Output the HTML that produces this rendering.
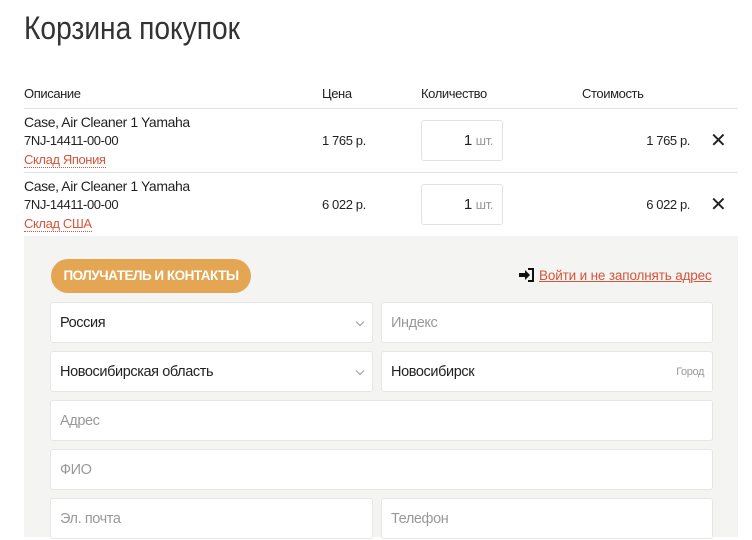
<!DOCTYPE html>
<html><head><meta charset="utf-8"><style>
*{margin:0;padding:0;box-sizing:border-box}
body{width:752px;height:537px;overflow:hidden;background:#fff;font-family:"Liberation Sans",sans-serif;color:#222;position:relative;letter-spacing:-0.4px}
.a{position:absolute;white-space:nowrap}
h1{position:absolute;left:24px;top:10px;font-weight:normal;font-size:32px;color:#333;transform:scaleX(0.88);transform-origin:left;white-space:nowrap;letter-spacing:0}
.hd{font-size:13px;top:86px}
.line{position:absolute;left:24px;width:714px;height:1px;background:#e2e2e2}
.t{font-size:14px}
.s{font-size:13px}
.r{font-size:13px;color:#d4553a;border-bottom:1px dotted #d4553a;line-height:14px}
.q{position:absolute;left:421px;width:82px;height:41px;border:1px solid #e2e2e2;border-radius:3px;font-size:15px;text-align:right;padding-right:9px;line-height:39px}
.q span{color:#999;font-size:13px}
.x{font-size:20px;font-family:"DejaVu Sans",sans-serif}
.panel{position:absolute;left:24px;top:236px;width:714px;height:301px;background:#f4f4f2}
.btn{position:absolute;left:51px;top:259px;width:200px;height:34px;border-radius:17px;background:#e4a653;color:#fff;font-size:13.5px;font-weight:bold;text-align:center;line-height:34px;letter-spacing:-0.5px}
.f{position:absolute;height:41px;background:#fff;border:1px solid #e6e6e4;border-radius:3px;font-size:14.5px;line-height:41px;padding-left:9px}
.p{color:#999}
.chev{position:absolute;right:9px;top:16px;width:6px;height:6px;border-right:1px solid #999;border-bottom:1px solid #999;transform:rotate(45deg)}
</style></head><body>
<h1>Корзина покупок</h1>
<div class="a hd" style="left:24px">Описание</div>
<div class="a hd" style="left:322px">Цена</div>
<div class="a hd" style="left:421px">Количество</div>
<div class="a hd" style="left:582px">Стоимость</div>
<div class="line" style="top:108px"></div>
<div class="a t" style="left:24px;top:114px">Case, Air Cleaner 1 Yamaha</div>
<div class="a s" style="left:24px;top:133px">7NJ-14411-00-00</div>
<div class="a r" style="left:24px;top:153px">Склад Япония</div>
<div class="a s" style="left:322px;top:133px">1 765 р.</div>
<div class="q" style="top:120px">1 <span>шт.</span></div>
<div class="a s" style="right:62px;top:133px">1 765 р.</div>
<div class="a x" style="left:710px;top:128px">✕</div>
<div class="line" style="top:172px"></div>
<div class="a t" style="left:24px;top:178px">Case, Air Cleaner 1 Yamaha</div>
<div class="a s" style="left:24px;top:197px">7NJ-14411-00-00</div>
<div class="a r" style="left:24px;top:217px">Склад США</div>
<div class="a s" style="left:322px;top:197px">6 022 р.</div>
<div class="q" style="top:184px">1 <span>шт.</span></div>
<div class="a s" style="right:62px;top:197px">6 022 р.</div>
<div class="a x" style="left:710px;top:192px">✕</div>
<div class="panel"></div>
<div class="btn">ПОЛУЧАТЕЛЬ И КОНТАКТЫ</div>
<svg class="a" style="left:519px;top:268px" width="16" height="14" viewBox="0 0 16 14"><path d="M0 5h6V2l5 5-5 5V9H0z" fill="#111"/><path d="M9 1h5v12H9" fill="none" stroke="#111" stroke-width="2"/></svg>
<div class="a" style="left:539px;top:268px;font-size:13.5px;letter-spacing:-0.15px;color:#d4553a;text-decoration:underline">Войти и не заполнять адрес</div>
<div class="f" style="left:50px;top:302px;width:323px">Россия<div class="chev"></div></div>
<div class="f p" style="left:381px;top:302px;width:332px">Индекс</div>
<div class="f" style="left:50px;top:351px;width:323px">Новосибирская область<div class="chev"></div></div>
<div class="f" style="left:381px;top:351px;width:332px">Новосибирск<span style="position:absolute;right:8px;font-size:11px;color:#999">Город</span></div>
<div class="f p" style="left:50px;top:400px;width:663px">Адрес</div>
<div class="f p" style="left:50px;top:449px;width:663px">ФИО</div>
<div class="f p" style="left:50px;top:498px;width:323px">Эл. почта</div>
<div class="f p" style="left:381px;top:498px;width:332px">Телефон</div>
</body></html>
